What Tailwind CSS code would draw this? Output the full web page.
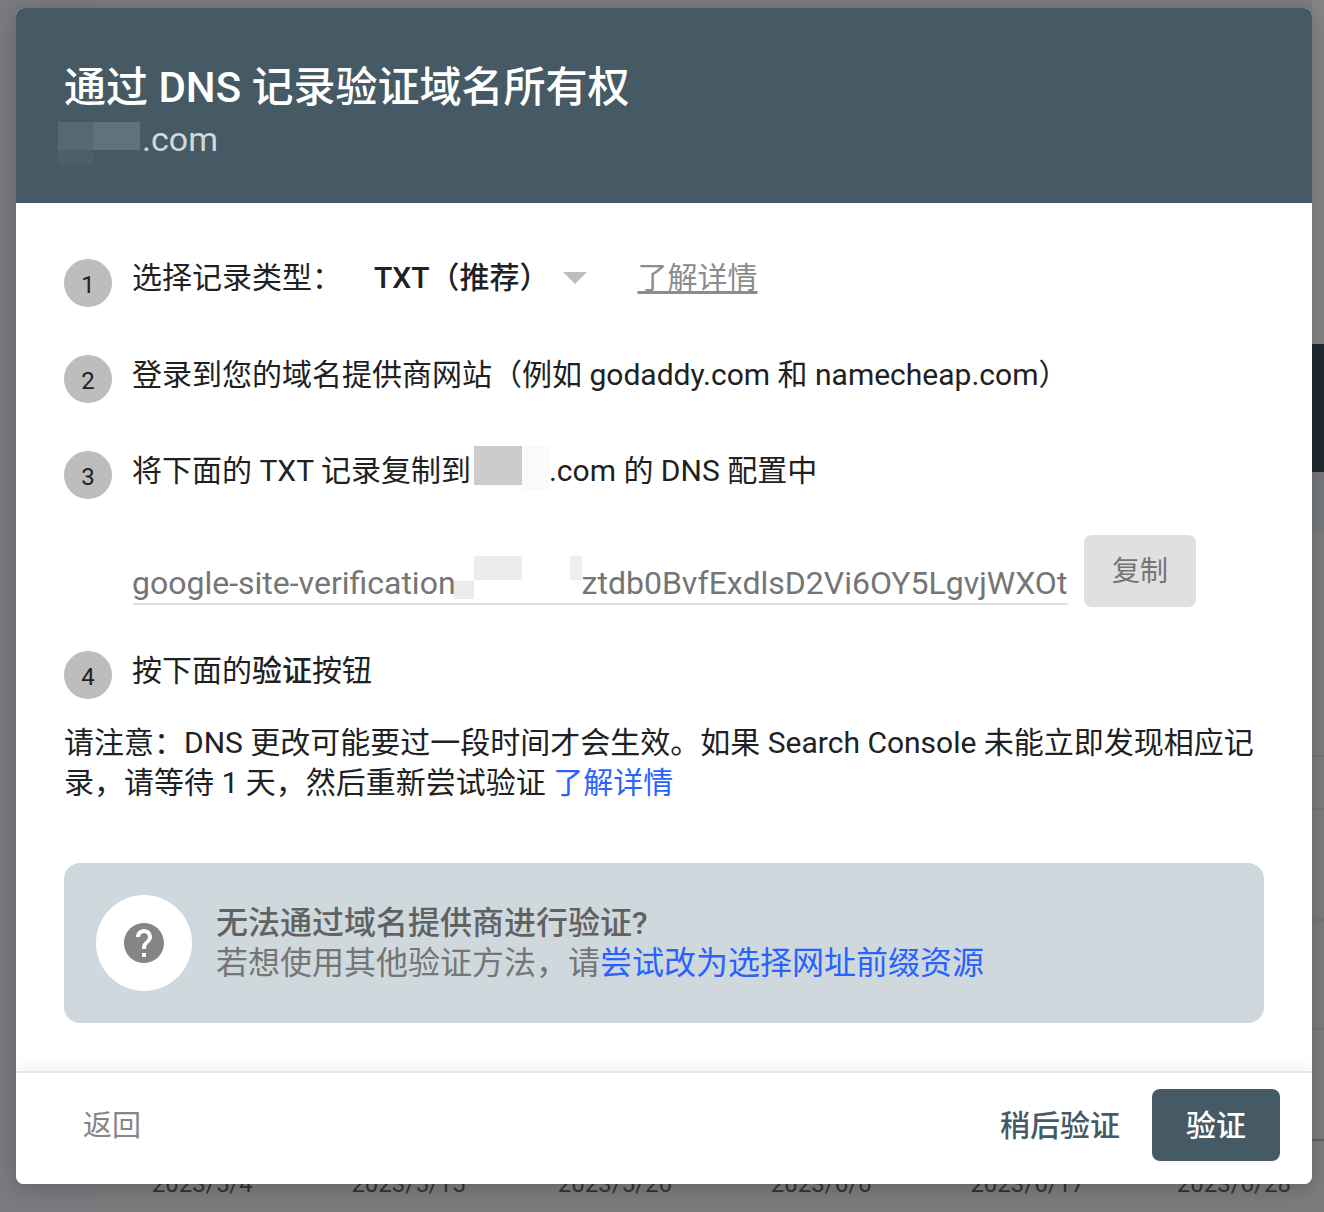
<!DOCTYPE html>
<html lang="zh-CN">
  <head>
    <meta charset="UTF-8" />
    <title>通过 DNS 记录验证域名所有权</title>
    <script src="https://cdn.jsdelivr.net/npm/@tailwindcss/browser@4"></script>
  </head>
  <body class="relative w-[1324px] h-[1212px] overflow-hidden bg-[#7c7c7c] font-['Roboto','Noto_Sans_CJK_SC',sans-serif] text-[30px] text-[#212121]">
    <!-- Dimmed page behind the dialog -->
    <div class="absolute inset-0 flex">
      <div class="w-[97px] shrink-0 bg-[#7a7b80]"></div>
      <div class="w-[1240px] shrink-0 pt-[1168px] pl-[2px]">
        <div class="grid grid-cols-6 text-center text-[24px] leading-[32px] text-[#333]">
          <span>2023/5/4</span>
          <span>2023/5/15</span>
          <span>2023/5/26</span>
          <span>2023/6/6</span>
          <span>2023/6/17</span>
          <span>2023/6/28</span>
        </div>
      </div>
    </div>
    <div class="absolute top-0 bottom-0 right-0 w-[12px] flex flex-col">
      <div class="h-[344px] bg-[#848484]"></div>
      <div class="h-[128px] bg-[#1f2b30]"></div>
      <div class="h-[61px] bg-[#75787c]"></div>
      <div class="h-[224px] border-b-2 border-[#757575]"></div>
      <div class="h-[53px] border-b-2 border-[#757575]"></div>
      <div class="h-[111px] border-b-2 border-[#757575]"></div>
      <div class="h-[109px] border-b-2 border-[#757575]"></div>
      <div class="h-[111px] border-b-2 border-[#606060]"></div>
    </div>

    <!-- Dialog -->
    <div class="absolute left-4 top-2 w-[1296px] h-[1176px] flex flex-col rounded-lg overflow-hidden bg-white shadow-[0_4px_24px_rgba(0,0,0,0.2)]">
      <header class="h-[195px] shrink-0 bg-[#455a64] pl-[48px] pt-[56px] text-white">
        <h1 class="text-[42px] leading-[48px] font-medium">通过 DNS 记录验证域名所有权</h1>
        <div class="mt-[7px] flex items-center h-10 text-[34px] leading-10 text-[#cfd8dc]">
          <span class="relative -ml-[6px] w-[84px] h-10 shrink-0">
            <i class="absolute left-0 top-[3px] w-[35px] h-[31px] bg-[#566973]"></i>
            <i class="absolute left-0 top-[31px] w-[35px] h-[14px] bg-[#4d6069]"></i>
            <i class="absolute left-[35px] top-[3px] w-[47px] h-[28px] bg-[#60727b]"></i>
          </span>
          <span>.com</span>
        </div>
      </header>

      <main class="flex-1 px-12 pt-[55px]">
        <div class="flex h-[96px]">
          <span class="mt-px w-12 h-12 shrink-0 rounded-full bg-[#bdbdbd] flex items-center justify-center pt-1 text-[24px] leading-none">1</span>
          <div class="ml-5 flex h-10 items-center leading-10">
            <span>选择记录类型：</span>
            <span class="ml-[32px] font-medium">TXT（推荐）</span>
            <svg class="ml-[13px] mt-[-1px]" width="24" height="12" viewBox="0 0 24 12"><path d="M0 0h24L12 12z" fill="#bdbdbd" /></svg>
            <a class="ml-[51px] text-[#8c8c8c] underline underline-offset-[3px]">了解详情</a>
          </div>
        </div>
        <div class="flex h-[96px]">
          <span class="mt-px w-12 h-12 shrink-0 rounded-full bg-[#bdbdbd] flex items-center justify-center pt-1 text-[24px] leading-none">2</span>
          <div class="ml-5 mt-px h-10 leading-10 whitespace-nowrap">登录到您的域名提供商网站（例如 godaddy.com 和 namecheap.com）</div>
        </div>
        <div class="flex h-[85px]">
          <span class="mt-px w-12 h-12 shrink-0 rounded-full bg-[#bdbdbd] flex items-center justify-center pt-1 text-[24px] leading-none">3</span>
          <div class="ml-5 mt-px flex h-10 leading-10 whitespace-nowrap">
            <span>将下面的 TXT 记录复制到</span>
            <span class="relative ml-[3px] w-[75px] h-10 shrink-0">
              <i class="absolute left-0 -top-[5px] w-12 h-[39px] bg-[#cccccc]"></i>
              <i class="absolute left-12 -top-[5px] w-[27px] h-[44px] bg-[#fafafa]"></i>
            </span>
            <span>.com 的 DNS 配置中</span>
          </div>
        </div>
        <div class="flex items-start pl-[69px] h-[115px]">
          <div class="w-[935px] h-[70px] border-b-2 border-[#e0e0e0] flex items-end leading-10 text-[32px] text-[#757575] whitespace-nowrap">
            <span class="-ml-px">google-site-verification</span>
            <span class="relative w-[126px] h-10 shrink-0">
              <i class="absolute -left-[2px] top-[18px] w-5 h-[18px] bg-[#ebebeb]"></i>
              <i class="absolute left-[18px] -top-[7px] w-12 h-6 bg-[#ececec]"></i>
              <i class="absolute left-[114px] -top-[7px] w-3 h-6 bg-[#eeeeee]"></i>
            </span>
            <span>ztdb0BvfExdlsD2Vi6OY5LgvjWXOt</span>
          </div>
          <button class="ml-4 w-[112px] h-[72px] rounded-lg bg-[#e0e0e0] text-[28px] text-[#757575] pt-[2px]">复制</button>
        </div>
        <div class="flex h-[73px]">
          <span class="mt-px w-12 h-12 shrink-0 rounded-full bg-[#bdbdbd] flex items-center justify-center pt-1 text-[24px] leading-none">4</span>
          <div class="ml-5 mt-px h-10 leading-10">按下面的<b class="font-medium">验证</b>按钮</div>
        </div>
        <p class="leading-10">请注意：DNS 更改可能要过一段时间才会生效。如果 Search Console 未能立即发现相应记录，请等待 1 天，然后重新尝试验证 <a class="text-[#2962ff]">了解详情</a></p>

        <div class="mt-[60px] h-[160px] rounded-2xl bg-[#cfd8dc] flex items-center pl-8 text-[32px] text-[#757575]">
          <div class="w-24 h-24 shrink-0 rounded-full bg-white flex items-center justify-center">
            <svg width="48" height="48" viewBox="0 0 24 24"><path fill="#858585" d="M12 2C6.48 2 2 6.48 2 12s4.48 10 10 10 10-4.48 10-10S17.52 2 12 2zm1 17h-2v-2h2v2zm2.07-7.75l-.9.92C13.45 12.9 13 13.5 13 15h-2v-.5c0-1.1.45-2.1 1.17-2.83l1.24-1.26c.37-.36.59-.86.59-1.41 0-1.1-.9-2-2-2s-2 .9-2 2H8c0-2.21 1.79-4 4-4s4 1.79 4 4c0 .88-.36 1.68-.93 2.25z" /></svg>
          </div>
          <div class="ml-6 leading-10">
            <div class="font-medium text-[#616161]">无法通过域名提供商进行验证?</div>
            <div>若想使用其他验证方法，请<a class="text-[#2962ff]">尝试改为选择网址前缀资源</a></div>
          </div>
        </div>
      </main>

      <footer class="h-[113px] shrink-0 border-t-2 border-[#e6e6e6] shadow-[0_-6px_10px_rgba(0,0,0,0.04)] flex items-center justify-between pl-[67px] pr-8 pb-[7px] bg-white">
        <span class="mt-1 text-[29px] text-[#858585]">返回</span>
        <div class="flex items-center">
          <span class="font-medium text-[#455a64]">稍后验证</span>
          <button class="ml-[32px] w-32 h-[72px] rounded-lg bg-[#455a64] text-white font-medium">验证</button>
        </div>
      </footer>
    </div>
  </body>
</html>
